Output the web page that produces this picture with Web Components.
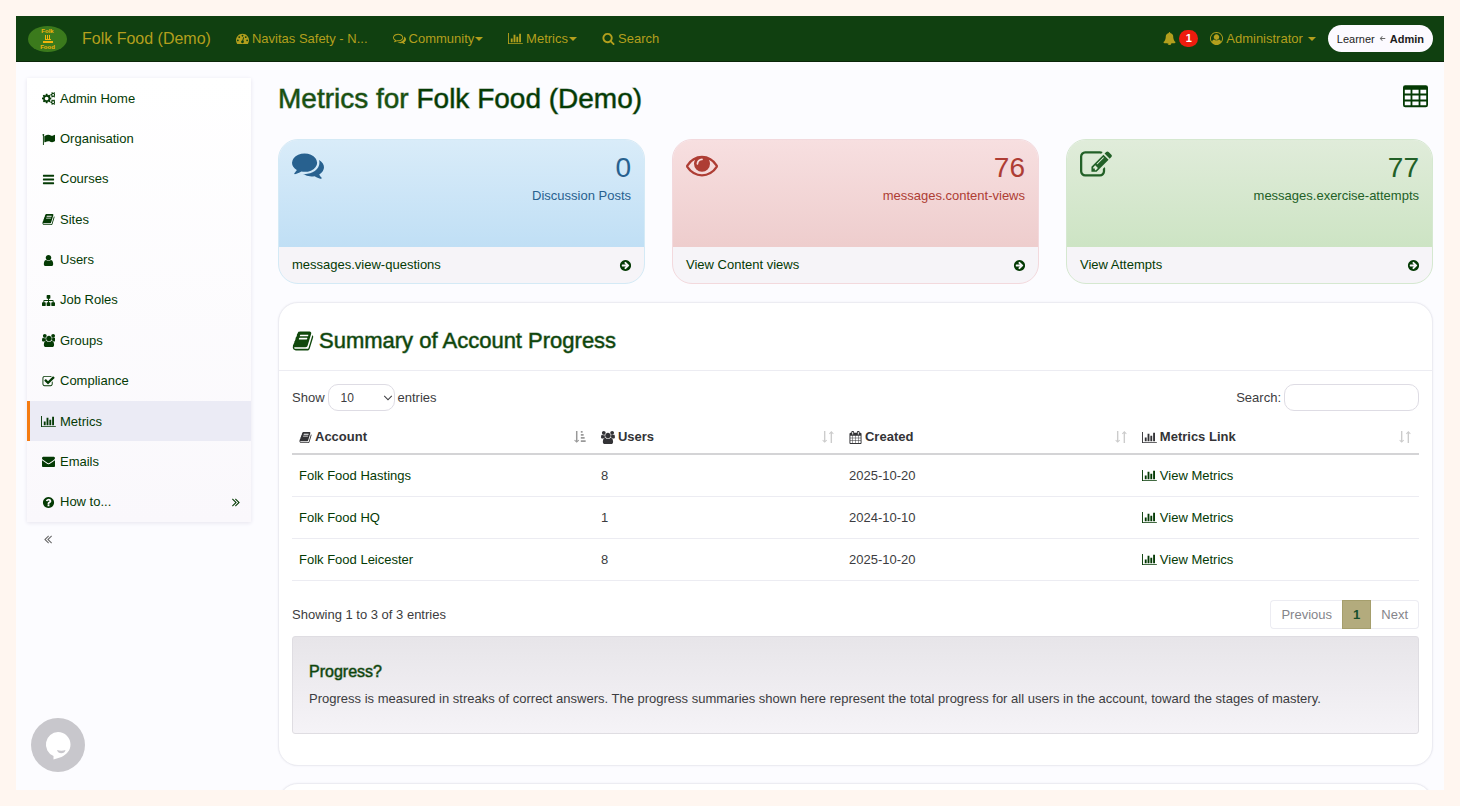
<!DOCTYPE html>
<html lang="en">
<head>
<meta charset="utf-8">
<meta name="viewport" content="width=device-width, initial-scale=1">
<title>Metrics for Folk Food (Demo)</title>
<style>
  :root {
    --green: #043a04;
    --gold: #b39f1d;
    --text: #3c3c40;
    --line: #ececf2;
  }
  body {
    margin: 0;
    padding: 16px;
    box-sizing: border-box;
    height: 100vh;
    overflow: hidden;
    background: #fff6f0;
    color: var(--text);
    font: 13px/18px "Liberation Sans", Arial, sans-serif;
  }
</style>
</head>
<body>
<app-shell>
  <nav-bar slot="nav" brand="Folk Food (Demo)">
    <nav-link icon="dashboard">Navitas Safety - N...</nav-link>
    <nav-link icon="comments-o" caret>Community</nav-link>
    <nav-link icon="bar-chart" caret>Metrics</nav-link>
    <nav-link icon="search">Search</nav-link>
  </nav-bar>

  <side-menu slot="side">
    <side-item icon="cogs">Admin Home</side-item>
    <side-item icon="flag">Organisation</side-item>
    <side-item icon="bars">Courses</side-item>
    <side-item icon="book">Sites</side-item>
    <side-item icon="user">Users</side-item>
    <side-item icon="sitemap">Job Roles</side-item>
    <side-item icon="users">Groups</side-item>
    <side-item icon="check">Compliance</side-item>
    <side-item icon="bar-chart" active>Metrics</side-item>
    <side-item icon="envelope">Emails</side-item>
    <side-item icon="question" more>How to...</side-item>
  </side-menu>

  <page-title><span slot="lead">Metrics for</span> Folk Food (Demo)</page-title>

  <stat-row>
    <stat-card tone="blue" icon="comments" value="0" label="Discussion Posts">messages.view-questions</stat-card>
    <stat-card tone="red" icon="eye" value="76" label="messages.content-views">View Content views</stat-card>
    <stat-card tone="green" icon="edit" value="77" label="messages.exercise-attempts">View Attempts</stat-card>
  </stat-row>

  <info-panel icon="book" heading="Summary of Account Progress">
    <account-table></account-table>
    <help-well heading="Progress?">Progress is measured in streaks of correct answers. The progress summaries shown here represent the total progress for all users in the account, toward the stages of mastery.</help-well>
  </info-panel>
  <info-panel></info-panel>
</app-shell>
<chat-bubble></chat-bubble>

<script>
// icon shapes: [viewBox width, path], all of them 1792 high
const ROUND = 'M1664 896q0 209-103 385.5t-279.5 279.5-385.5 103-385.5-103-279.5-279.5-103-385.5 103-385.5 279.5-279.5 385.5-103 385.5 103 279.5 279.5 103 385.5z';
const ICONS = {
  'book': [1792, 'M1703 478q40 57 18 129l-275 906q-19 64-76.5 107.5t-122.5 43.5h-923q-77 0-148.5-53.5t-99.5-131.5q-24-67-2-127 0-4 3-27t4-37q1-8-3-21.5t-3-19.5q2-11 8-21t16.5-23.5 16.5-23.5q23-38 45-91.5t30-91.5q3-10 .5-30t-.5-28q3-11 17-28t17-23q21-36 42-92t25-90q1-9-2.5-32t.5-28q4-13 22-30.5t22-22.5q19-26 42.5-84.5t27.5-96.5q1-8-3-25.5t-2-26.5q2-8 9-18t18-23 17-21q8-12 16.5-30.5t15-35 16-36 19.5-32 26.5-23.5 36-11.5 47.5 5.5l-1 3q38-9 51-9h761q74 0 114 56t18 130l-274 906q-36 119-71.5 153.5t-128.5 34.5h-869q-27 0-38 15-11 16-1 43 24 70 144 70h923q29 0 56-15.5t35-41.5l300-987q7-22 5-57 38 15 59 43zm-1064 2q-4 13 2 22.5t20 9.5h608q13 0 25.5-9.5t16.5-22.5l21-64q4-13-2-22.5t-20-9.5h-608q-13 0-25.5 9.5t-16.5 22.5zm-83 256q-4 13 2 22.5t20 9.5h608q13 0 25.5-9.5t16.5-22.5l21-64q4-13-2-22.5t-20-9.5h-608q-13 0-25.5 9.5t-16.5 22.5z'],
  'bar-chart': [2048, 'M640 896v512h-256v-512h256zm384-512v1024h-256v-1024h256zm1024 1152v128h-2048v-1536h128v1408h1920zm-640-896v768h-256v-768h256zm384-384v1152h-256v-1152h256z'],
  'bars': [1792, 'M1664 1344v128q0 26-19 45t-45 19h-1408q-26 0-45-19t-19-45v-128q0-26 19-45t45-19h1408q26 0 45 19t19 45zm0-512v128q0 26-19 45t-45 19h-1408q-26 0-45-19t-19-45v-128q0-26 19-45t45-19h1408q26 0 45 19t19 45zm0-512v128q0 26-19 45t-45 19h-1408q-26 0-45-19t-19-45v-128q0-26 19-45t45-19h1408q26 0 45 19t19 45z'],
  'user': [1792, 'M1536 1399q0 109-62.5 187t-150.5 78h-854q-88 0-150.5-78t-62.5-187q0-85 8.5-160.5t31.5-152 58.5-131 94-89 134.5-34.5q131 128 313 128t313-128q76 0 134.5 34.5t94 89 58.5 131 31.5 152 8.5 160.5zm-256-887q0 159-112.5 271.5t-271.5 112.5-271.5-112.5-112.5-271.5 112.5-271.5 271.5-112.5 271.5 112.5 112.5 271.5z'],
  'sitemap': [1792, 'M1792 1248v320q0 40-28 68t-68 28h-320q-40 0-68-28t-28-68v-320q0-40 28-68t68-28h96v-192h-512v192h96q40 0 68 28t28 68v320q0 40-28 68t-68 28h-320q-40 0-68-28t-28-68v-320q0-40 28-68t68-28h96v-192h-512v192h96q40 0 68 28t28 68v320q0 40-28 68t-68 28h-320q-40 0-68-28t-28-68v-320q0-40 28-68t68-28h96v-192q0-52 38-90t90-38h512v-192h-96q-40 0-68-28t-28-68v-320q0-40 28-68t68-28h320q40 0 68 28t28 68v320q0 40-28 68t-68 28h-96v192h512q52 0 90 38t38 90v192h96q40 0 68 28t28 68z'],
  'users': [1920, 'M593 896q-162 5-265 128h-134q-82 0-138-40.5t-56-118.5q0-353 124-353 6 0 43.5 21t97.5 42.5 119 21.5q67 0 133-23-5 37-5 66 0 159 81 288zm1071 637q0 120-73 189.5t-194 69.5h-874q-121 0-194-69.5t-73-189.5q0-53 3.5-103.5t14-109 26.5-108.5 43-97.5 62-81 85.5-53.5 111.5-20q10 0 43 21.5t73 48 107 48 135 21.5 135-21.5 107-48 73-48 43-21.5q61 0 111.5 20t85.5 53.5 62 81 43 97.5 26.5 108.5 14 109 3.5 103.5zm-1024-1277q0 106-75 181t-181 75-181-75-75-181 75-181 181-75 181 75 75 181zm704 384q0 159-112.5 271.5t-271.5 112.5-271.5-112.5-112.5-271.5 112.5-271.5 271.5-112.5 271.5 112.5 112.5 271.5zm576 225q0 78-56 118.5t-138 40.5h-134q-103-123-265-128 81-129 81-288 0-29-5-66 66 23 133 23 59 0 119-21.5t97.5-42.5 43.5-21q124 0 124 353zm-128-609q0 106-75 181t-181 75-181-75-75-181 75-181 181-75 181 75 75 181z'],
  'check': [1792, 'M1472 930v318q0 119-84.5 203.5t-203.5 84.5h-832q-119 0-203.5-84.5t-84.5-203.5v-832q0-119 84.5-203.5t203.5-84.5h832q63 0 117 25 15 7 18 23 3 17-9 29l-49 49q-10 10-23 10-3 0-9-2-23-6-45-6h-832q-66 0-113 47t-47 113v832q0 66 47 113t113 47h832q66 0 113-47t47-113v-254q0-13 9-22l64-64q10-10 23-10 6 0 12 3 20 8 20 29zm231-489l-814 814q-24 24-57 24t-57-24l-430-430q-24-24-24-57t24-57l110-110q24-24 57-24t57 24l263 263 647-647q24-24 57-24t57 24l110 110q24 24 24 57t-24 57z'],
  'envelope': [1792, 'M1792 710v794q0 66-47 113t-113 47h-1472q-66 0-113-47t-47-113v-794q44 49 101 87 362 246 497 345 57 42 92.5 65.5t94.5 48 110 24.5h2q51 0 110-24.5t94.5-48 92.5-65.5q170-123 498-345 57-39 100-87zm0-294q0 79-49 151t-122 123q-376 261-468 325-10 7-42.5 30.5t-54 38-52 32.5-57.5 27-50 9h-2q-23 0-50-9t-57.5-27-52-32.5-54-38-42.5-30.5q-91-64-262-182.5t-205-142.5q-62-42-117-115.5t-55-136.5q0-78 41.5-130t118.5-52h1472q65 0 112.5 47t47.5 113z'],
  'question': [1792, 'M1024 1376v-192q0-14-9-23t-23-9h-192q-14 0-23 9t-9 23v192q0 14 9 23t23 9h192q14 0 23-9t9-23zm256-672q0-88-55.5-163t-138.5-116-170-41q-243 0-371 213-15 24 8 42l132 100q7 6 19 6 16 0 25-12 53-68 86-92 34-24 86-24 48 0 85.5 26t37.5 59q0 38-20 61t-68 45q-63 28-115.5 86.5t-52.5 125.5v36q0 14 9 23t23 9h192q14 0 23-9t9-23q0-19 21.5-49.5t54.5-49.5q32-18 49-28.5t46-35 44.5-48 28-60.5 12.5-81z' + ROUND],
  'angles': [1792, 'M979 960q0 13-10 23l-466 466q-10 10-23 10t-23-10l-50-50q-10-10-10-23t10-23l393-393-393-393q-10-10-10-23t10-23l50-50q10-10 23-10t23 10l466 466q10 10 10 23zm384 0q0 13-10 23l-466 466q-10 10-23 10t-23-10l-50-50q-10-10-10-23t10-23l393-393-393-393q-10-10-10-23t10-23l50-50q10-10 23-10t23 10l466 466q10 10 10 23z'],
  'flag': [1792, 'M320 256q0 72-64 110v1266q0 13-9.5 22.5t-22.5 9.5h-64q-13 0-22.5-9.5t-9.5-22.5v-1266q-64-38-64-110 0-53 37.5-90.5t90.5-37.5 90.5 37.5 37.5 90.5zm1472 64v763q0 25-12.5 38.5t-39.5 27.5q-215 116-369 116-61 0-123.5-22t-108.5-48-115.5-48-142.5-22q-192 0-464 146-17 9-33 9-26 0-45-19t-19-45v-742q0-32 31-55 21-14 79-43 236-120 421-120 107 0 200 29t219 88q38 19 88 19 54 0 117.5-21t110-47 88-47 54.5-21q26 0 45 19t19 45z'],
  'cogs': [1920, 'M896 896q0-106-75-181t-181-75-181 75-75 181 75 181 181 75 181-75 75-181zm768 512q0-52-38-90t-90-38-90 38-38 90q0 53 37.5 90.5t90.5 37.5 90.5-37.5 37.5-90.5zm0-1024q0-52-38-90t-90-38-90 38-38 90q0 53 37.5 90.5t90.5 37.5 90.5-37.5 37.5-90.5zm-384 421v185q0 10-7 19.5t-16 10.5l-155 24q-11 35-32 76 34 48 90 115 7 11 7 20 0 12-7 19-23 30-82.5 89.5t-78.5 59.5q-11 0-21-7l-115-90q-37 19-77 31-11 108-23 155-7 24-30 24h-186q-11 0-20-7.5t-10-17.5l-23-153q-34-10-75-31l-118 89q-7 7-20 7-11 0-21-8-144-133-144-160 0-9 7-19 10-14 41-53t47-61q-23-44-35-82l-152-24q-10-1-17-9.5t-7-19.5v-185q0-10 7-19.5t16-10.5l155-24q11-35 32-76-34-48-90-115-7-11-7-20 0-12 7-20 22-30 82-89t79-59q11 0 21 7l115 90q34-18 77-32 11-108 23-154 7-24 30-24h186q11 0 20 7.5t10 17.5l23 153q34 10 75 31l118-89q8-7 20-7 11 0 21 8 144 133 144 160 0 8-7 19-12 16-42 54t-45 60q23 48 34 82l152 23q10 2 17 10.5t7 19.5zm640 533v140q0 16-149 31-12 27-30 52 51 113 51 138 0 4-4 7-122 71-124 71-8 0-46-47t-52-68q-20 2-30 2t-30-2q-14 21-52 68t-46 47q-2 0-124-71-4-3-4-7 0-25 51-138-18-25-30-52-149-15-149-31v-140q0-16 149-31 13-29 30-52-51-113-51-138 0-4 4-7 4-2 35-20t59-34 30-16q8 0 46 46.5t52 67.5q20-2 30-2t30 2q51-71 92-112l6-2q4 0 124 70 4 3 4 7 0 25-51 138 17 23 30 52 149 15 149 31zm0-1024v140q0 16-149 31-12 27-30 52 51 113 51 138 0 4-4 7-122 71-124 71-8 0-46-47t-52-68q-20 2-30 2t-30-2q-14 21-52 68t-46 47q-2 0-124-71-4-3-4-7 0-25 51-138-18-25-30-52-149-15-149-31v-140q0-16 149-31 13-29 30-52-51-113-51-138 0-4 4-7 4-2 35-20t59-34 30-16q8 0 46 46.5t52 67.5q20-2 30-2t30 2q51-71 92-112l6-2q4 0 124 70 4 3 4 7 0 25-51 138 17 23 30 52 149 15 149 31z'],
  'comments': [1792, 'M1408 768q0 139-94 257t-256.5 186.5-353.5 68.5q-86 0-176-16-124 88-278 128-36 9-86 16h-3q-11 0-20.5-8t-11.5-21q-1-3-1-6.5t.5-6.5 2-6l2.5-5 3.5-5.5 4-5 4.5-5 4-4.5q5-6 23-25t26-29.5 22.5-29 25-38.5 20.5-44q-124-72-195-177t-71-224q0-139 94-257t256.5-186.5 353.5-68.5 353.5 68.5 256.5 186.5 94 257zm384 256q0 120-71 224.5t-195 176.5q10 24 20.5 44t25 38.5 22.5 29 26 29.5 23 25q1 1 4 4.5t4.5 5 4 5 3.5 5.5l2.5 5 2 6 .5 6.5-1 6.5q-3 14-13 22t-22 7q-50-7-86-16-154-40-278-128-90 16-176 16-271 0-472-132 58 4 88 4 161 0 309-45t264-129q125-92 192-212t67-254q0-77-23-152 129 71 204 178t75 230z'],
  'comments-o': [1792, 'M704 384q-153 0-286 52t-211.5 141-78.5 191q0 82 53 158t149 132l97 56-35 84q34-20 62-39l44-31 53 10q78 14 153 14 153 0 286-52t211.5-141 78.5-191-78.5-191-211.5-141-286-52zm0-128q191 0 353.5 68.5t256.5 186.5 94 257-94 257-256.5 186.5-353.5 68.5q-86 0-176-16-124 88-278 128-36 9-86 16h-3q-11 0-20.5-8t-11.5-21q-1-3-1-6.5t.5-6.5 2-6l2.5-5 3.5-5.5 4-5 4.5-5 4-4.5q5-6 23-25t26-29.5 22.5-29 25-38.5 20.5-44q-124-72-195-177t-71-224q0-139 94-257t256.5-186.5 353.5-68.5zm822 1169q10 24 20.5 44t25 38.5 22.5 29 26 29.5 23 25q1 1 4 4.5t4.5 5 4 5 3.5 5.5l2.5 5 2 6 .5 6.5-1 6.5q-3 14-13 22t-22 7q-50-7-86-16-154-40-278-128-90 16-176 16-271 0-472-132 58 4 88 4 161 0 309-45t264-129q125-92 192-212t67-254q0-77-23-152 129 71 204 178t75 230q0 120-71 224.5t-195 176.5z'],
  'eye': [1792, 'M1664 960q-152-236-381-353 61 104 61 225 0 185-131.5 316.5t-316.5 131.5-316.5-131.5-131.5-316.5q0-121 61-225-229 117-381 353 133 205 333.5 326.5t434.5 121.5 434.5-121.5 333.5-326.5zm-720-384q0-20-14-34t-34-14q-125 0-214.5 89.5t-89.5 214.5q0 20 14 34t34 14 34-14 14-34q0-86 61-147t147-61q20 0 34-14t14-34zm848 384q0 34-20 69-140 230-376.5 368.5t-499.5 138.5-499.5-139-376.5-368q-20-35-20-69t20-69q140-229 376.5-368t499.5-139 499.5 139 376.5 368q20 35 20 69z'],
  'edit': [1792, 'M888 1184l116-116-152-152-116 116v56h96v96h56zm440-720q-16-16-33 1l-350 350q-17 17-1 33t33-1l350-350q17-17 1-33zm80 594v190q0 119-84.5 203.5t-203.5 84.5h-832q-119 0-203.5-84.5t-84.5-203.5v-832q0-119 84.5-203.5t203.5-84.5h832q63 0 117 25 15 7 18 23 3 17-9 29l-49 49q-14 14-32 8-23-6-45-6h-832q-66 0-113 47t-47 113v832q0 66 47 113t113 47h832q66 0 113-47t47-113v-126q0-13 9-22l64-64q15-15 35-7t20 29zm-96-738l288 288-672 672h-288v-288zm444 132l-92 92-288-288 92-92q28-28 68-28t68 28l152 152q28 28 28 68t-28 68z'],
  'arrow-circle': [1792, 'M1413 896q0-27-18-45l-91-91-362-362q-18-18-45-18t-45 18l-91 91q-18 18-18 45t18 45l189 189h-502q-26 0-45 19t-19 45v128q0 26 19 45t45 19h502l-189 189q-19 19-19 45t19 45l91 91q18 18 45 18t45-18l362-362 91-91q18-18 18-45z' + ROUND],
  'search': [1792, 'M1216 832q0-185-131.5-316.5t-316.5-131.5-316.5 131.5-131.5 316.5 131.5 316.5 316.5 131.5 316.5-131.5 131.5-316.5zm512 832q0 52-38 90t-90 38q-54 0-90-38l-343-342q-179 124-399 124-143 0-273.5-55.5t-225-150-150-225-55.5-273.5 55.5-273.5 150-225 225-150 273.5-55.5 273.5 55.5 225 150 150 225 55.5 273.5q0 220-124 399l343 343q37 37 37 90z'],
  'dashboard': [1792, 'M384 1152q0-53-37.5-90.5t-90.5-37.5-90.5 37.5-37.5 90.5 37.5 90.5 90.5 37.5 90.5-37.5 37.5-90.5zm192-448q0-53-37.5-90.5t-90.5-37.5-90.5 37.5-37.5 90.5 37.5 90.5 90.5 37.5 90.5-37.5 37.5-90.5zm428 481l101-382q6-26-7.5-48.5t-38.5-29.5-48 6.5-30 39.5l-101 382q-60 5-107 43.5t-63 98.5q-20 77 20 146t117 89 146-20 89-117q16-60-6-117t-72-91zm660-33q0-53-37.5-90.5t-90.5-37.5-90.5 37.5-37.5 90.5 37.5 90.5 90.5 37.5 90.5-37.5 37.5-90.5zm-640-640q0-53-37.5-90.5t-90.5-37.5-90.5 37.5-37.5 90.5 37.5 90.5 90.5 37.5 90.5-37.5 37.5-90.5zm448 192q0-53-37.5-90.5t-90.5-37.5-90.5 37.5-37.5 90.5 37.5 90.5 90.5 37.5 90.5-37.5 37.5-90.5zm320 448q0 261-141 483-19 29-54 29h-1402q-35 0-54-29-141-221-141-483 0-182 71-348t191-286 286-191 348-71 348 71 286 191 191 286 71 348z'],
  'bell': [1792, 'M912 1696q0-16-16-16-59 0-101.5-42.5t-42.5-101.5q0-16-16-16t-16 16q0 73 51.5 124.5t124.5 51.5q16 0 16-16zm816-288q0 52-38 90t-90 38h-448q0 106-75 181t-181 75-181-75-75-181h-448q-52 0-90-38t-38-90q50-42 91-88t85-119.5 74.5-158.5 50-206 19.5-260q0-152 117-282.5t307-158.5q-8-19-8-39 0-40 28-68t68-28 68 28 28 68q0 20-8 39 190 28 307 158.5t117 282.5q0 139 19.5 260t50 206 74.5 158.5 85 119.5 91 88z'],
  'user-circle': [1792, 'M896 0q182 0 348 71t286 191 191 286 71 348q0 181-70.5 347t-190.5 286-286 191.5-349 71.5-349-71-285.5-191.5-190.5-286-71-347.5 71-348 191-286 286-191 348-71zm619 1351q149-205 149-455 0-156-61-298t-164-245-245-164-298-61-298 61-245 164-164 245-61 298q0 250 149 455 66-327 306-327 131 128 313 128t313-128q240 0 306 327zm-235-647q0-159-112.5-271.5t-271.5-112.5-271.5 112.5-112.5 271.5 112.5 271.5 271.5 112.5 271.5-112.5 112.5-271.5z'],
  'calendar': [1792, 'M192 1664h288v-288h-288v288zm352 0h320v-288h-320v288zm-352-352h288v-320h-288v320zm352 0h320v-320h-320v320zm-352-384h288v-288h-288v288zm736 736h320v-288h-320v288zm-384-736h320v-288h-320v288zm768 736h288v-288h-288v288zm-384-352h320v-320h-320v320zm-352-864v-288q0-13-9.5-22.5t-22.5-9.5h-64q-13 0-22.5 9.5t-9.5 22.5v288q0 13 9.5 22.5t22.5 9.5h64q13 0 22.5-9.5t9.5-22.5zm736 864h288v-320h-288v320zm-384-384h320v-288h-320v288zm384 0h288v-288h-288v288zm32-480v-288q0-13-9.5-22.5t-22.5-9.5h-64q-13 0-22.5 9.5t-9.5 22.5v288q0 13 9.5 22.5t22.5 9.5h64q13 0 22.5-9.5t9.5-22.5zm384-64v1280q0 52-38 90t-90 38h-1408q-52 0-90-38t-38-90v-1280q0-52 38-90t90-38h128v-96q0-66 47-113t113-47h64q66 0 113 47t47 113v96h384v-96q0-66 47-113t113-47h64q66 0 113 47t47 113v96h128q52 0 90 38t38 90z'],
  'table': [1792, 'M160 96h1472q160 0 160 160v1248q0 160-160 160h-1472q-160 0-160-160v-1248q0-160 160-160zM128 416v272h416v-272zM672 416v272h448v-272zM1248 416v272h416v-272zM128 832v272h416v-272zM672 832v272h448v-272zM1248 832v272h416v-272zM128 1248v272h416v-272zM672 1248v272h448v-272zM1248 1248v272h416v-272z'],
  'sort': [1792, 'M380 128h180v1250l130-130 80 90-300 300-300-300 80-90 130 130zM1232 1650h180v-1250l130 130 80-90-300-300-300 300 80 90 130-130z'],
  'sort-asc': [1792, 'M380 128h190v1250l140-130 80 90-315 300-315-300 80-90 140 130zM1000 128h230v220h-230zM1000 520h360v220h-360zM1000 910h490v220h-490zM1000 1300h620v220h-620z'],
  'arrow-left': [1792, 'M180 896l620-620 150 150-360 360h1010v220h-1010l360 360-150 150z'],
  'chevron': [1792, 'M896 1330l-740-740 120-120 620 620 620-620 120 120z']
};

// common base: stamps the template of the class into an open shadow root
class BaseElement extends HTMLElement {
  constructor() {
    super();
    this.attachShadow({ mode: 'open' });
  }
  attr(name) {
    return this.getAttribute(name) || '';
  }
  connectedCallback() {
    const template = document.createElement('template');
    template.innerHTML = `<style>${this.styles()}</style>${this.markup()}`;
    this.shadowRoot.replaceChildren(template.content.cloneNode(true));
  }
}

customElements.define('fa-icon', class extends BaseElement {
  styles() {
    return `
      :host { display: inline-flex; flex: none; justify-content: center; }
      :host([fixed]) { width: 17px; }
      svg { display: block; height: 1em; width: auto; fill: currentColor; fill-rule: evenodd; }
      :host([flip]) svg { transform: scaleX(-1); }
    `;
  }
  markup() {
    const [w, d] = ICONS[this.attr('name')];
    return `<svg viewBox="0 0 ${w} 1792" aria-hidden="true"><path d="${d}"/></svg>`;
  }
});

customElements.define('app-shell', class extends BaseElement {
  styles() {
    return `
      :host { display: block; height: 100%; overflow: hidden; background: #fcfcff; }
      .cols { display: grid; grid-template-columns: 224px minmax(0, 1fr); column-gap: 27px; padding: 16px 11px 0; }
      main { display: flex; flex-direction: column; }
    `;
  }
  markup() {
    return `
      <slot name="nav"></slot>
      <div class="cols">
        <slot name="side"></slot>
        <main><slot></slot></main>
      </div>
    `;
  }
});

const CARET = `.caret { border: 4px solid transparent; border-top-color: currentColor; border-bottom: 0; }`;

customElements.define('nav-link', class extends BaseElement {
  styles() {
    return `
      :host { display: block; }
      a { display: flex; align-items: center; gap: 3px; color: inherit; text-decoration: none; white-space: nowrap; }
      .caret { margin-left: -2px; }
      ${CARET}
    `;
  }
  markup() {
    return `<a href="#"><fa-icon name="${this.attr('icon')}"></fa-icon><slot></slot>${this.hasAttribute('caret') ? '<span class="caret"></span>' : ''}</a>`;
  }
});

customElements.define('nav-bar', class extends BaseElement {
  styles() {
    return `
      :host { display: flex; align-items: center; gap: 25px; height: 45px; padding: 0 11px 0 12px; box-sizing: content-box;
        background: #104010; border-bottom: 1px solid #0a260a; color: var(--gold); }
      .brand { display: flex; align-items: center; gap: 15px; color: inherit; text-decoration: none; font-size: 16px; white-space: nowrap; }
      .logo { display: grid; align-content: center; justify-items: center; width: 39px; height: 26px; border-radius: 50%;
        background: #3b7a1c; color: #f3b50c; font: bold 6px/8px "Liberation Sans", Arial, sans-serif; }
      .logo svg { display: block; width: 10px; height: 8px; fill: currentColor; }
      .right { display: flex; align-items: center; margin-left: auto; gap: 12px; }
      .bell, .user { display: flex; align-items: center; gap: 3px; color: inherit; text-decoration: none; }
      .user .caret { margin-left: 2px; }
      .badge { width: 19px; border-radius: 9px; background: #ee1c0e; color: #fff; font-weight: bold; font-size: 11px; line-height: 17px; text-align: center; }
      .pill { display: flex; align-items: center; gap: 4px; height: 27px; padding: 0 9px; border: 0; border-radius: 14px;
        background: #fcfaff; color: #1c1c1c; font: 11px "Liberation Sans", Arial, sans-serif; }
      .pill fa-icon { font-size: 7px; color: #666; }
      ${CARET}
    `;
  }
  markup() {
    return `
      <a class="brand" href="#">
        <span class="logo"><span>Folk</span><svg viewBox="0 0 10 8" aria-hidden="true"><path d="M2 0h1v4H2zM4 0h1v4H4zM6 0h1v4H6zM2 4h6v1H2zM0 6h10v2H0z"/></svg><span>Food</span></span>
        <span>${this.attr('brand')}</span>
      </a>
      <slot></slot>
      <div class="right">
        <a class="bell" href="#" aria-label="Notifications"><fa-icon name="bell"></fa-icon><span class="badge">1</span></a>
        <a class="user" href="#"><fa-icon name="user-circle"></fa-icon><span>Administrator</span><span class="caret"></span></a>
        <button class="pill" type="button"><span>Learner</span><fa-icon name="arrow-left"></fa-icon><b>Admin</b></button>
      </div>
    `;
  }
});

customElements.define('side-menu', class extends BaseElement {
  styles() {
    return `
      :host { display: block; }
      nav { display: grid; grid-auto-rows: 1fr; min-height: 444px; background: linear-gradient(#fff, #faf8fc); box-shadow: 0 1px 4px #e6e4ee; }
      button { display: block; margin: 10px 0 0 14px; padding: 0; border: 0; background: none; color: #666; font-size: 14px; }
    `;
  }
  markup() {
    return `<nav><slot></slot></nav><button type="button" aria-label="Collapse menu"><fa-icon name="angles" flip></fa-icon></button>`;
  }
});

customElements.define('side-item', class extends BaseElement {
  styles() {
    return `
      :host { display: grid; border-left: 3px solid transparent; }
      :host([active]) { background: #ebebf5; border-left-color: #f57c13; }
      a { display: flex; align-items: center; gap: 3px; padding: 4px 8px 3px 10px; color: var(--green); text-decoration: none; }
      .more { margin-left: auto; font-size: 14px; }
    `;
  }
  markup() {
    return `<a href="#"><fa-icon fixed name="${this.attr('icon')}"></fa-icon><span><slot></slot></span>${this.hasAttribute('more') ? '<fa-icon class="more" name="angles"></fa-icon>' : ''}</a>`;
  }
});

// headings are a little heavier than regular, done with a half transparent stroke
const MEDIUM = `font-weight: normal; -webkit-text-stroke: 1px rgb(10 66 10 / .5);`;

customElements.define('page-title', class extends BaseElement {
  styles() {
    return `
      :host { display: flex; align-items: flex-start; justify-content: space-between; padding-right: 5px; color: var(--green); }
      h1 { margin: 0; font-size: 28px; line-height: 42px; ${MEDIUM} }
      ::slotted([slot=lead]) { color: #1b5411; }
      a { margin-top: 6px; color: inherit; font-size: 25px; }
      fa-icon { display: flex; }
    `;
  }
  markup() {
    return `<h1><slot name="lead"></slot> <slot></slot></h1><a href="#" aria-label="Table view"><fa-icon name="table"></fa-icon></a>`;
  }
});

customElements.define('stat-row', class extends BaseElement {
  styles() {
    return `:host { display: grid; grid-template-columns: repeat(3, 1fr); gap: 27px; margin: 19px 0 18px; }`;
  }
  markup() {
    return `<slot></slot>`;
  }
});

customElements.define('stat-card', class extends BaseElement {
  styles() {
    return `
      :host { display: block; overflow: hidden; border: 1px solid var(--edge); border-radius: 20px; background: #f6f4f8; }
      :host([tone=blue]) { --edge: #d4eaf6; --from: #d9ecf9; --to: #c0dff5; --ink: #28618f; }
      :host([tone=red]) { --edge: #f3d9dd; --from: #f7dfe0; --to: #eecdcd; --ink: #ae3d34; }
      :host([tone=green]) { --edge: #d5e8d0; --from: #e0ecda; --to: #cde4c4; --ink: #226027; }
      .top { display: flex; justify-content: space-between; min-height: 107px; padding: 9px 13px 0; box-sizing: border-box;
        background: linear-gradient(var(--from), var(--to)); color: var(--ink); }
      fa-icon.big { font-size: 32px; }
      .figures { padding-top: 5px; text-align: right; }
      .value { font-size: 28px; line-height: 28px; margin-bottom: 5px; }
      a { display: flex; align-items: center; justify-content: space-between; height: 36px; padding: 0 12px 0 13px; color: var(--green); text-decoration: none; }
    `;
  }
  markup() {
    return `
      <div class="top">
        <fa-icon class="big" name="${this.attr('icon')}"></fa-icon>
        <div class="figures">
          <div class="value">${this.attr('value')}</div>
          <div>${this.attr('label')}</div>
        </div>
      </div>
      <a href="#"><span><slot></slot></span><fa-icon name="arrow-circle"></fa-icon></a>
    `;
  }
});

customElements.define('info-panel', class extends BaseElement {
  styles() {
    return `
      :host { display: block; margin-bottom: 17px; border: 1px solid var(--line); border-radius: 20px; background: #fff; box-shadow: 0 0 2px var(--line); }
      h2 { display: flex; align-items: center; gap: 5px; margin: 0; padding: 24px 13px 15px; border-bottom: 1px solid var(--line);
        color: #10480c; font-size: 22px; line-height: 28px; ${MEDIUM} }
      .body { padding: 13px 13px 31px; }
    `;
  }
  markup() {
    const head = this.hasAttribute('heading')
      ? `<h2><fa-icon name="${this.attr('icon')}"></fa-icon>${this.attr('heading')}</h2>`
      : '';
    return `${head}<div class="body"><slot></slot></div>`;
  }
});

customElements.define('account-table', class extends BaseElement {
  styles() {
    return `
      :host { display: block; }
      .bar, .foot, .bar div { display: flex; align-items: center; }
      .bar, .foot { justify-content: space-between; }
      .bar div { gap: 3px; }
      select, input { box-sizing: border-box; height: 27px; border: 1px solid #dedce4; border-radius: 10px; background: #fff;
        color: inherit; font: 12px "Liberation Sans", Arial, sans-serif; }
      .pick { position: relative; display: block; }
      select { appearance: none; width: 67px; padding: 0 12px; }
      .pick fa-icon { position: absolute; right: 2px; top: 9px; font-size: 10px; pointer-events: none; }
      input { width: 135px; padding: 0 10px; }
      table { width: 100%; margin: 8px 0 19px; border-collapse: separate; border-spacing: 0; table-layout: fixed; }
      th, td { padding: 0 7px; text-align: left; box-sizing: border-box; }
      th { height: 36px; padding-top: 2px; border-bottom: 2px solid #d4d4d6; color: #333336; }
      td { height: 42px; border-bottom: 1px solid var(--line); }
      th:nth-child(1) { width: 26.8%; }
      th:nth-child(2) { width: 22%; }
      th:nth-child(3) { width: 26%; }
      .cell { display: flex; align-items: center; gap: 3px; }
      .sort { margin-left: auto; font-size: 14px; color: #ccc; }
      .sort[name=sort-asc] { color: #999; }
      a { color: var(--green); text-decoration: none; }
      .pages { display: flex; }
      .pages button { height: 29px; padding: 0 10px; border: 1px solid var(--line); background: #fff; color: #85858a; font: inherit; }
      .pages button:first-child { border-radius: 4px 0 0 4px; border-right: 0; }
      .pages button:last-child { border-radius: 0 4px 4px 0; border-left: 0; }
      .pages .on { border-color: #a59e6c; background: #b3ab7d; color: #17502c; font-weight: bold; }
    `;
  }
  markup() {
    const heads = [['book', 'Account'], ['users', 'Users'], ['calendar', 'Created'], ['bar-chart', 'Metrics Link']];
    const rows = [
      ['Folk Food Hastings', 8, '2025-10-20'],
      ['Folk Food HQ', 1, '2024-10-10'],
      ['Folk Food Leicester', 8, '2025-10-20']
    ];
    return `
      <div class="bar">
        <div>
          <label for="length">Show</label>
          <span class="pick">
            <select id="length"><option>10</option><option>25</option><option>50</option></select>
            <fa-icon name="chevron"></fa-icon>
          </span>
          <label for="length">entries</label>
        </div>
        <div><label for="filter">Search:</label><input id="filter" type="search"></div>
      </div>
      <table>
        <thead><tr>
          ${heads.map(([icon, name], i) => `<th><span class="cell"><fa-icon name="${icon}"></fa-icon>${name}<fa-icon class="sort" name="${i ? 'sort' : 'sort-asc'}"></fa-icon></span></th>`).join('')}
        </tr></thead>
        <tbody>
          ${rows.map(([name, users, date]) => `<tr>
            <td><a href="#">${name}</a></td>
            <td>${users}</td>
            <td>${date}</td>
            <td><a class="cell" href="#"><fa-icon name="bar-chart"></fa-icon>View Metrics</a></td>
          </tr>`).join('')}
        </tbody>
      </table>
      <div class="foot">
        <span>Showing 1 to 3 of 3 entries</span>
        <div class="pages"><button type="button">Previous</button><button type="button" class="on">1</button><button type="button">Next</button></div>
      </div>
    `;
  }
});

customElements.define('help-well', class extends BaseElement {
  styles() {
    return `
      :host { display: block; margin-top: 7px; padding: 25px 16px; border: 1px solid #dfdde2; border-radius: 3px;
        background: linear-gradient(#e7e5e9, #f5f3f7); }
      h3 { margin: 0 0 8px; color: #10480c; font-size: 16px; line-height: 20px; ${MEDIUM} }
      p { margin: 0; }
    `;
  }
  markup() {
    return `<h3>${this.attr('heading')}</h3><p><slot></slot></p>`;
  }
});

customElements.define('chat-bubble', class extends BaseElement {
  styles() {
    return `
      :host { position: fixed; left: 31px; bottom: 34px; }
      button { display: block; width: 54px; height: 54px; padding: 0; border: 0; border-radius: 50%; background: #c8c7cc; }
      svg { display: block; }
    `;
  }
  markup() {
    return `
      <button type="button" aria-label="Open chat">
        <svg viewBox="0 0 54 54" width="54" height="54" aria-hidden="true">
          <path fill="#fff" d="M27 14a12.500 12.500 0 0 1 12.500 12.500c0 6-4 10-9 12.500l-8 2.500v-3.500a12.500 12.500 0 0 1 4.500-24z"/>
          <path fill="#c8c7cc" d="M26 32q4.500 1.600 8.500 0-.8 3.200-4.200 3.200-3.300 0-4.300-3.200z"/>
        </svg>
      </button>
    `;
  }
});
</script>
</body>
</html>
